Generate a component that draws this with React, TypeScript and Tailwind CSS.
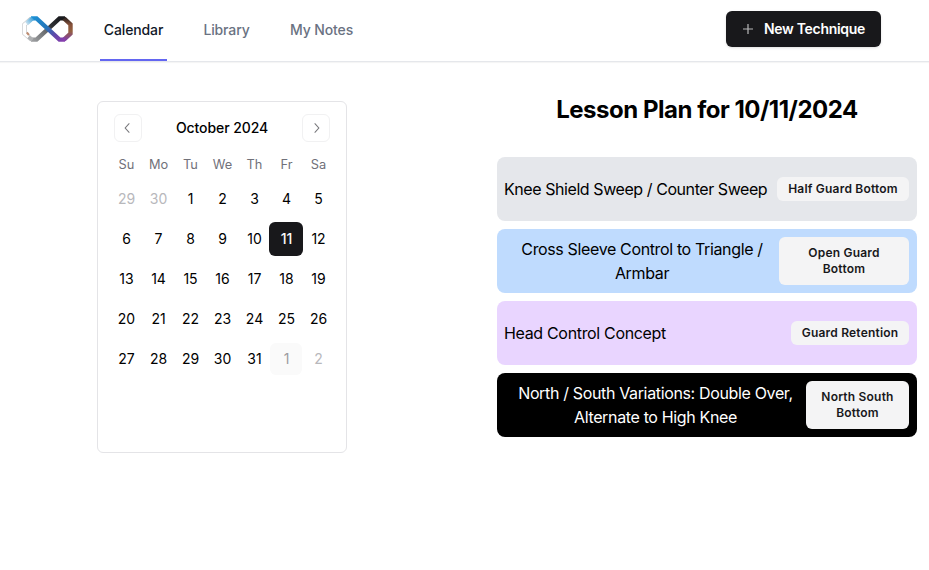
import React from "react";

const weekdays = ["Su", "Mo", "Tu", "We", "Th", "Fr", "Sa"];

const weeks: number[][] = [
  [29, 30, 1, 2, 3, 4, 5],
  [6, 7, 8, 9, 10, 11, 12],
  [13, 14, 15, 16, 17, 18, 19],
  [20, 21, 22, 23, 24, 25, 26],
  [27, 28, 29, 30, 31, 1, 2],
];

const lessons = [
  { title: "Knee Shield Sweep / Counter Sweep", tag: "Half Guard Bottom", row: "bg-[#e5e7eb] text-black", titleBox: "whitespace-nowrap tracking-[-0.43px]", tagBox: "h-6 w-[132px]" },
  { title: "Cross Sleeve Control to Triangle / Armbar", tag: "Open Guard Bottom", row: "bg-[#bfdbfe] text-black", titleBox: "w-[275px] pl-px tracking-[-0.36px]", tagBox: "h-12 w-[130px] px-6" },
  { title: "Head Control Concept", tag: "Guard Retention", row: "bg-[#e9d5ff] text-black", titleBox: "whitespace-nowrap tracking-[-0.33px]", tagBox: "h-6 w-[118px]" },
  { title: "North / South Variations: Double Over, Alternate to High Knee", tag: "North South Bottom", row: "bg-black text-white", titleBox: "w-[301px] pl-[2px] tracking-[-0.35px]", tagBox: "h-12 w-[103px] px-3" },
];

function Logo() {
  return (
    <svg width="52" height="28" viewBox="0 0 52 28" fill="none" aria-label="Logo">
      <defs>
        <linearGradient id="blueViolet" x1="10" y1="3" x2="41" y2="26" gradientUnits="userSpaceOnUse">
          <stop stopColor="#1d91d5" />
          <stop offset="0.45" stopColor="#2474b8" />
          <stop offset="0.75" stopColor="#6246a8" />
          <stop offset="1" stopColor="#873fae" />
        </linearGradient>
        <linearGradient id="grayBlack" x1="12" y1="26" x2="38" y2="3" gradientUnits="userSpaceOnUse">
          <stop stopColor="#9a9c9e" />
          <stop offset="0.45" stopColor="#66696c" />
          <stop offset="0.65" stopColor="#303236" />
          <stop offset="1" stopColor="#191a1d" />
        </linearGradient>
        <linearGradient id="rightEdge" x1="44" y1="3" x2="44" y2="25" gradientUnits="userSpaceOnUse">
          <stop stopColor="#2d2421" />
          <stop offset="0.3" stopColor="#855039" />
          <stop offset="0.6" stopColor="#94603f" />
          <stop offset="1" stopColor="#8140a5" />
        </linearGradient>
        <linearGradient id="paleBlue" x1="4" y1="9" x2="11" y2="3" gradientUnits="userSpaceOnUse">
          <stop stopColor="#d5e6f0" />
          <stop offset="1" stopColor="#3da0d8" />
        </linearGradient>
      </defs>
      <path d="M9 24.6 H14.5 L37.5 3.4 H43" stroke="url(#grayBlack)" strokeWidth="4.4" />
      <path d="M42 3.4 L48.5 9.5 V18.5 L42 24.6" stroke="url(#rightEdge)" strokeWidth="4.4" />
      <path d="M9 3.4 H14.5 L37.5 24.6 H43" stroke="url(#blueViolet)" strokeWidth="4.4" />
      <path d="M9.5 3.4 L2.6 9.5 V18.5 L9.5 24.6" stroke="#bfc2c5" strokeWidth="4.4" />
      <path d="M9.5 3.4 L2.6 9.5 V18.5 L9 24.2" stroke="#ffffff" strokeWidth="3.2" />
      <path d="M10.5 3.2 L4.6 8.6" stroke="url(#paleBlue)" strokeWidth="4.2" />
      <path d="M4.8 17.5 L7 20" stroke="#bd8b70" strokeWidth="2" />
      <path d="M6.5 21.8 L10.4 25" stroke="#aeb0b2" strokeWidth="3.6" />
    </svg>
  );
}

function Chevron({ next = false }: { next?: boolean }) {
  return (
    <svg width="16" height="16" viewBox="0 0 15 15" fill="#77777b">
      {next ? (
        <path d="M6.1584 3.13508C6.35985 2.94621 6.67627 2.95642 6.86514 3.15788L10.6151 7.15788C10.7954 7.3502 10.7954 7.64949 10.6151 7.84182L6.86514 11.8418C6.67627 12.0433 6.35985 12.0535 6.1584 11.8646C5.95694 11.6757 5.94673 11.3593 6.1356 11.1579L9.565 7.49985L6.1356 3.84182C5.94673 3.64036 5.95694 3.32394 6.1584 3.13508Z" />
      ) : (
        <path d="M8.84182 3.13514C9.04327 3.32401 9.05348 3.64042 8.86462 3.84188L5.43521 7.49991L8.86462 11.1579C9.05348 11.3594 9.04327 11.6758 8.84182 11.8647C8.64036 12.0535 8.32394 12.0433 8.13508 11.8419L4.38508 7.84188C4.20477 7.64955 4.20477 7.35027 4.38508 7.15794L8.13508 3.15794C8.32394 2.95648 8.64036 2.94628 8.84182 3.13514Z" />
      )}
    </svg>
  );
}

function Header() {
  return (
    <header className="flex h-[62px] justify-between border-b border-gray-200 pl-[22px] pr-12 shadow-[0_1px_1px_rgba(0,0,0,0.04)]">
      <div className="flex">
        <div className="flex w-[52px] items-start pt-[15px]"><Logo /></div>
        <nav className="ml-[26px] flex gap-8 text-sm font-medium tracking-[-0.12px] text-gray-500">
          <a className="flex h-[61px] w-[67px] items-center justify-center border-b-2 border-[#6366f1] text-gray-900">Calendar</a>
          <a className="flex h-[61px] w-[55px] items-center justify-center border-b-2 border-transparent">Library</a>
          <a className="flex h-[61px] w-[71px] items-center justify-center whitespace-nowrap border-b-2 border-transparent">My Notes</a>
        </nav>
      </div>
      <button className="mt-[11px] flex h-9 w-[155px] items-center rounded-md bg-[#18181b] pl-[14px] text-sm font-semibold tracking-[-0.3px] text-white shadow-sm">
        <svg width="16" height="16" viewBox="0 0 16 16" fill="none" stroke="#b8b8ba" strokeWidth="1.2">
          <path d="M8 3v10M3 8h10" />
        </svg>
        <span className="ml-2 whitespace-nowrap">New Technique</span>
      </button>
    </header>
  );
}

function Calendar() {
  return (
    <section className="h-[352px] w-[250px] rounded-md border border-[#e4e4e7] px-3 pt-3">
      <div className="flex h-7 items-center justify-between px-1">
        <button className="flex size-7 items-center justify-center rounded-md border border-[#f1f1f2]"><Chevron /></button>
        <h2 className="text-sm font-medium tracking-[-0.08px]">October 2024</h2>
        <button className="flex size-7 items-center justify-center rounded-md border border-[#f1f1f2]"><Chevron next /></button>
      </div>
      <div className="mt-[13px] grid w-[224px] grid-cols-7 text-center text-[12.8px] leading-5 text-[#71717a]">
        {weekdays.map((day) => <span key={day} className="pl-px">{day}</span>)}
      </div>
      <div className="mt-2 flex flex-col gap-2">
        {weeks.map((week, row) => (
          <div key={row} className="grid h-8 w-[224px] grid-cols-7 text-sm">
            {week.map((day, col) => {
              const outside = (row === 0 && col < 2) || (row === 4 && col === 6);
              const selected = row === 1 && day === 11;
              const muted = row === 4 && col === 5;
              const tone = selected
                ? "-m-px rounded-md bg-[#18181b] text-[#fafafa] font-medium"
                : muted
                  ? "rounded-md bg-[#fafafa] text-[#9c9ca0]"
                  : outside
                    ? "text-[#b8b8bc]"
                    : "text-black";
              return <span key={col} className={`flex items-center justify-center pl-px ${tone}`}>{day}</span>;
            })}
          </div>
        ))}
      </div>
    </section>
  );
}

function LessonPlan() {
  return (
    <section className="w-[420px]">
      <h1 className="mt-[-9px] text-center text-2xl font-bold leading-9 tracking-[-0.48px]">Lesson Plan for 10/11/2024</h1>
      <div className="mt-[29px] flex flex-col gap-2">
        {lessons.map((lesson) => (
          <article key={lesson.title} className={`flex h-16 items-center justify-between rounded-lg pl-[7px] pr-2 ${lesson.row}`}>
            <p className={`shrink-0 text-center text-base leading-6 ${lesson.titleBox}`}>{lesson.title}</p>
            <span className={`flex shrink-0 items-center justify-center rounded-md bg-[#f4f4f5] text-center text-xs font-semibold leading-4 tracking-[0.2px] text-[#18181b] ${lesson.tagBox}`}>
              {lesson.tag}
            </span>
          </article>
        ))}
      </div>
    </section>
  );
}

export default function App() {
  return (
    <main className="min-h-screen w-full bg-white font-['Inter',sans-serif] text-black">
      <Header />
      <div className="flex items-start gap-[150px] pl-[97px] pt-[39px]">
        <Calendar />
        <LessonPlan />
      </div>
    </main>
  );
}
